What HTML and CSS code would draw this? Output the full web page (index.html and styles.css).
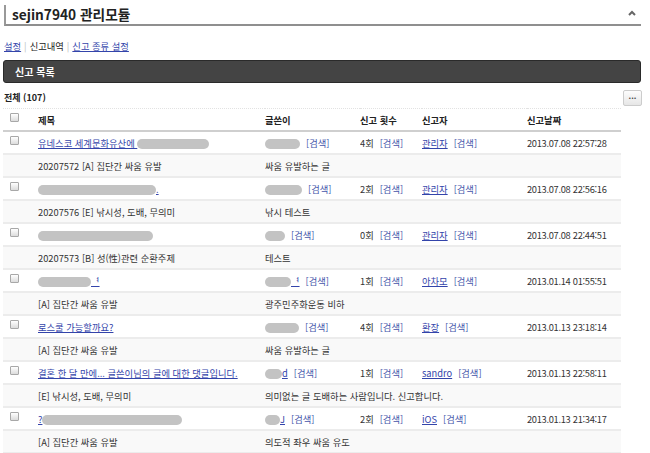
FILE: index.html
```html
<!DOCTYPE html>
<html lang="ko">
<head>
<meta charset="utf-8">
<title>sejin7940 관리모듈</title>
<link rel="stylesheet" href="styles.css">
</head>
<body>
<div class="hd">
  <h1 class="hd-title">sejin7940 관리모듈</h1>
  <svg class="caret" width="8" height="6" viewBox="0 0 8 6"><path d="M1 5 L4 2 L7 5" fill="none" stroke="#666" stroke-width="2"/></svg>
</div>
<div class="tabs">
  <a href="#">설정</a><span class="sep">|</span><span class="cur">신고내역</span><span class="sep">|</span><a href="#">신고 종류 설정</a>
</div>
<div class="bar">신고 목록</div>
<div class="total-row">
  <span class="total">전체 (107)</span>
  <span class="more">...</span>
</div>
<table class="list">
  <colgroup>
    <col class="c-cb"><col class="c-title"><col class="c-writer"><col class="c-count"><col class="c-rep"><col class="c-date">
  </colgroup>
  <thead>
    <tr><th class="cb-cell"><span class="cb"></span></th><th>제목</th><th>글쓴이</th><th>신고 횟수</th><th>신고자</th><th>신고날짜</th></tr>
  </thead>
  <tbody>
    <tr>
      <td class="cb-cell"><span class="cb"></span></td>
      <td><a href="#">유네스코 세계문화유산에 </a><span class="blur" style="width:72px"></span></td>
      <td><span class="blur" style="width:35px"></span><span class="srch">[검색]</span></td>
      <td>4회<span class="srch">[검색]</span></td>
      <td><a href="#">관리자</a><span class="srch">[검색]</span></td>
      <td class="date">2013.07.08 22:57:28</td>
    </tr>
    <tr class="desc"><td></td><td>20207572 [A] 집단간 싸움 유발</td><td colspan="4">싸움 유발하는 글</td></tr>
    <tr>
      <td class="cb-cell"><span class="cb"></span></td>
      <td><span class="blur" style="width:118px"></span><a href="#">.</a></td>
      <td><span class="blur" style="width:37px"></span><span class="srch">[검색]</span></td>
      <td>2회<span class="srch">[검색]</span></td>
      <td><a href="#">관리자</a><span class="srch">[검색]</span></td>
      <td class="date">2013.07.08 22:56:16</td>
    </tr>
    <tr class="desc"><td></td><td>20207576 [E] 낚시성, 도배, 무의미</td><td colspan="4">낚시 테스트</td></tr>
    <tr>
      <td class="cb-cell"><span class="cb"></span></td>
      <td><span class="blur" style="width:115px"></span></td>
      <td><span class="blur" style="width:20px"></span><span class="srch">[검색]</span></td>
      <td>0회<span class="srch">[검색]</span></td>
      <td><a href="#">관리자</a><span class="srch">[검색]</span></td>
      <td class="date">2013.07.08 22:44:51</td>
    </tr>
    <tr class="desc"><td></td><td>20207573 [B] 성(性)관련 순환주제</td><td colspan="4">테스트</td></tr>
    <tr>
      <td class="cb-cell"><span class="cb"></span></td>
      <td><span class="blur" style="width:53px"></span><a href="#">ᅧ</a></td>
      <td><span class="blur" style="width:26px"></span><a href="#">ᅧ</a><span class="srch">[검색]</span></td>
      <td>1회<span class="srch">[검색]</span></td>
      <td><a href="#">아차모</a><span class="srch">[검색]</span></td>
      <td class="date">2013.01.14 01:55:51</td>
    </tr>
    <tr class="desc"><td></td><td>[A] 집단간 싸움 유발</td><td colspan="4">광주민주화운동 비하</td></tr>
    <tr>
      <td class="cb-cell"><span class="cb"></span></td>
      <td><a href="#">로스쿨 가능할까요?</a></td>
      <td><span class="blur" style="width:34px"></span><span class="srch">[검색]</span></td>
      <td>4회<span class="srch">[검색]</span></td>
      <td><a href="#">환장</a><span class="srch">[검색]</span></td>
      <td class="date">2013.01.13 23:18:14</td>
    </tr>
    <tr class="desc"><td></td><td>[A] 집단간 싸움 유발</td><td colspan="4">싸움 유발하는 글</td></tr>
    <tr>
      <td class="cb-cell"><span class="cb"></span></td>
      <td><a href="#">결혼 한 달 만에... 글쓴이님의 글에 대한 댓글입니다.</a></td>
      <td><span class="blur" style="width:17px"></span><a href="#">d</a><span class="srch">[검색]</span></td>
      <td>1회<span class="srch">[검색]</span></td>
      <td><a href="#">sandro</a><span class="srch">[검색]</span></td>
      <td class="date">2013.01.13 22:58:11</td>
    </tr>
    <tr class="desc"><td></td><td>[E] 낚시성, 도배, 무의미</td><td colspan="4">의미없는 글 도배하는 사람입니다. 신고합니다.</td></tr>
    <tr>
      <td class="cb-cell"><span class="cb"></span></td>
      <td><a href="#">?</a><span class="blur" style="width:140px"></span></td>
      <td><span class="blur" style="width:15px"></span><a href="#">J</a><span class="srch">[검색]</span></td>
      <td>2회<span class="srch">[검색]</span></td>
      <td><a href="#">iOS</a><span class="srch">[검색]</span></td>
      <td class="date">2013.01.13 21:34:17</td>
    </tr>
    <tr class="desc"><td></td><td>[A] 집단간 싸움 유발</td><td colspan="4">의도적 좌우 싸움 유도</td></tr>
  </tbody>
</table>
</body>
</html>
```
FILE: styles.css
```css
html, body {
  margin: 0;
  background: #fff;
}
body {
  padding: 5px 9px 0 3px;
  font-family: "Noto Sans CJK KR", "Noto Sans", sans-serif;
  font-size: 9.3px;
  color: #333;
}
a {
  color: #3344aa;
  text-decoration: underline;
}
.hd {
  display: flex;
  align-items: center;
  justify-content: space-between;
  height: 19px;
  margin-left: 1px;
  padding-left: 6px;
  border-left: 2px solid #999;
  border-bottom: 2px solid #8f8f8f;
}
.hd-title {
  margin: 0;
  font-size: 13.7px;
  font-weight: bold;
  color: #222;
  line-height: 19px;
}
.caret {
  margin-right: 5px;
  margin-bottom: 4px;
}
.tabs {
  margin-top: 14px;
  line-height: 12px;
  height: 12px;
  padding-left: 1px;
}
.tabs .sep {
  color: #bbb;
  margin: 0 3px;
}
.tabs .cur {
  color: #222;
}
.bar {
  margin-top: 8px;
  height: 21px;
  line-height: 21px;
  background: #444;
  border: 1px solid #2a2a2a;
  border-radius: 3px;
  color: #fff;
  font-weight: bold;
  font-size: 10px;
  padding-left: 11px;
}
.total-row {
  display: flex;
  align-items: center;
  justify-content: space-between;
  margin-top: 6px;
  height: 17px;
  padding-left: 1px;
}
.total {
  font-weight: bold;
  font-size: 9px;
  color: #222;
}
.more {
  width: 17px;
  height: 14px;
  border: 1px solid #ccc;
  border-radius: 2px;
  background: linear-gradient(#fdfdfd, #e6e6e6);
  font-size: 8px;
  font-weight: bold;
  line-height: 10px;
  text-align: center;
  color: #444;
  margin-right: -1px;
}
.list {
  margin-top: 2px;
  width: 618px;
  table-layout: fixed;
  border-collapse: collapse;
  border-top: 1px dotted #e2e2e2;
}
.c-cb { width: 35px; }
.c-title { width: 227px; }
.c-writer { width: 95px; }
.c-count { width: 62px; }
.c-rep { width: 105px; }
.c-date { width: 94px; }
.list th, .list td {
  padding: 0;
  height: 21px;
  text-align: left;
  white-space: nowrap;
  overflow: hidden;
  vertical-align: middle;
}
.list th {
  font-weight: bold;
  color: #222;
  border-bottom: 2px solid #cfcfcf;
}
.list td {
  border-bottom: 2px solid #ececec;
}
.list td.date {
  letter-spacing: -0.3px;
}
.list .cb-cell {
  padding-left: 7px;
}
.cb {
  display: inline-block;
  width: 7px;
  height: 7px;
  border: 1px solid #a8a8a8;
  border-radius: 1px;
  background: linear-gradient(#fff, #dcdcdc);
  vertical-align: middle;
  margin-top: -6px;
}
.list tr.desc td {
  background: #f9f9f9;
}
.blur {
  display: inline-block;
  height: 10px;
  border-radius: 5px;
  background: #c3c3c3;
  vertical-align: middle;
}
.srch {
  color: #4455aa;
  margin-left: 6px;
}
```
